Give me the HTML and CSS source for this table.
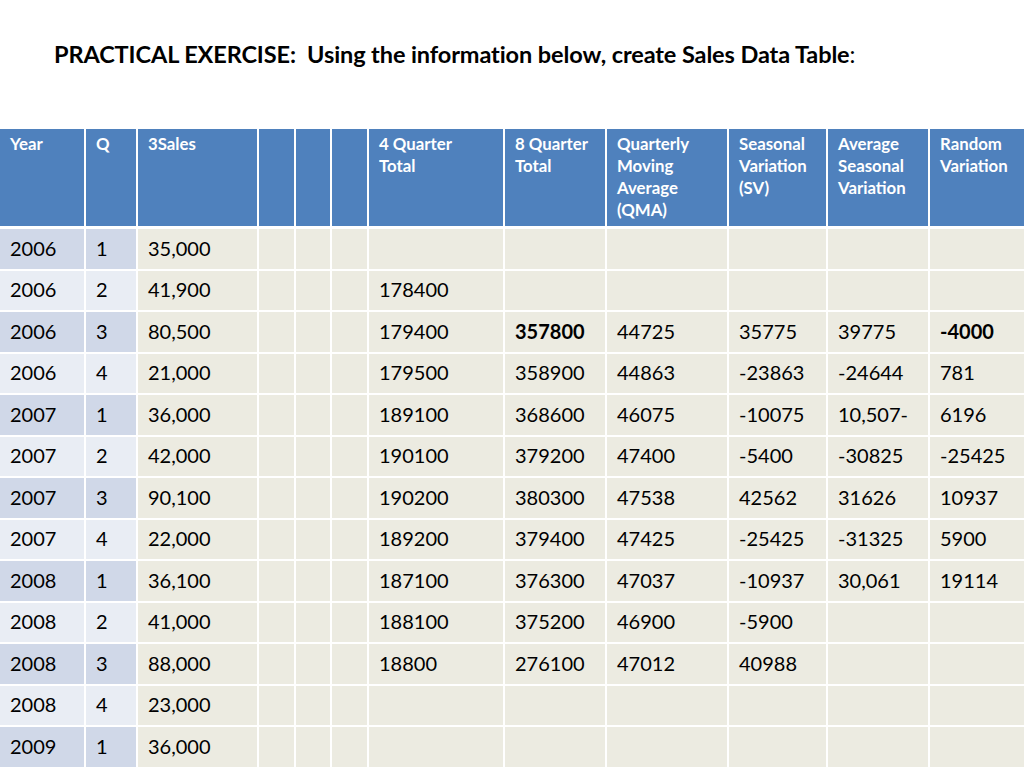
FILE: index.html
```html
<!DOCTYPE html>
<html>
<head>
<meta charset="utf-8">
<link rel="stylesheet" href="styles.css">
</head>
<body>
<h1 class="title"><b>PRACTICAL EXERCISE:&nbsp; Using the information below, create Sales Data Table</b>:</h1>
<table class="sales">
<colgroup>
<col style="width:86px"><col style="width:52px"><col style="width:121px"><col style="width:37px"><col style="width:36px"><col style="width:37px"><col style="width:136px"><col style="width:102px"><col style="width:122px"><col style="width:99px"><col style="width:102px"><col style="width:94px">
</colgroup>
<thead>
<tr>
<th>Year</th><th>Q</th><th>3Sales</th><th></th><th></th><th></th><th>4 Quarter<br>Total</th><th>8 Quarter Total</th><th>Quarterly Moving Average (QMA)</th><th>Seasonal Variation (SV)</th><th>Average Seasonal Variation</th><th>Random Variation</th>
</tr>
</thead>
<tbody>
<tr class="odd"><td class="k">2006</td><td class="k">1</td><td>35,000</td><td></td><td></td><td></td><td></td><td></td><td></td><td></td><td></td><td></td></tr>
<tr class="even"><td class="k">2006</td><td class="k">2</td><td>41,900</td><td></td><td></td><td></td><td>178400</td><td></td><td></td><td></td><td></td><td></td></tr>
<tr class="odd"><td class="k">2006</td><td class="k">3</td><td>80,500</td><td></td><td></td><td></td><td>179400</td><td class="b">357800</td><td>44725</td><td>35775</td><td>39775</td><td class="b">-4000</td></tr>
<tr class="even"><td class="k">2006</td><td class="k">4</td><td>21,000</td><td></td><td></td><td></td><td>179500</td><td>358900</td><td>44863</td><td>-23863</td><td>-24644</td><td>781</td></tr>
<tr class="odd"><td class="k">2007</td><td class="k">1</td><td>36,000</td><td></td><td></td><td></td><td>189100</td><td>368600</td><td>46075</td><td>-10075</td><td>10,507-</td><td>6196</td></tr>
<tr class="even"><td class="k">2007</td><td class="k">2</td><td>42,000</td><td></td><td></td><td></td><td>190100</td><td>379200</td><td>47400</td><td>-5400</td><td>-30825</td><td>-25425</td></tr>
<tr class="odd"><td class="k">2007</td><td class="k">3</td><td>90,100</td><td></td><td></td><td></td><td>190200</td><td>380300</td><td>47538</td><td>42562</td><td>31626</td><td>10937</td></tr>
<tr class="even"><td class="k">2007</td><td class="k">4</td><td>22,000</td><td></td><td></td><td></td><td>189200</td><td>379400</td><td>47425</td><td>-25425</td><td>-31325</td><td>5900</td></tr>
<tr class="odd"><td class="k">2008</td><td class="k">1</td><td>36,100</td><td></td><td></td><td></td><td>187100</td><td>376300</td><td>47037</td><td>-10937</td><td>30,061</td><td>19114</td></tr>
<tr class="even"><td class="k">2008</td><td class="k">2</td><td>41,000</td><td></td><td></td><td></td><td>188100</td><td>375200</td><td>46900</td><td>-5900</td><td></td><td></td></tr>
<tr class="odd"><td class="k">2008</td><td class="k">3</td><td>88,000</td><td></td><td></td><td></td><td>18800</td><td>276100</td><td>47012</td><td>40988</td><td></td><td></td></tr>
<tr class="even"><td class="k">2008</td><td class="k">4</td><td>23,000</td><td></td><td></td><td></td><td></td><td></td><td></td><td></td><td></td><td></td></tr>
<tr class="odd"><td class="k">2009</td><td class="k">1</td><td>36,000</td><td></td><td></td><td></td><td></td><td></td><td></td><td></td><td></td><td></td></tr>
</tbody>
</table>
</body>
</html>
```

FILE: styles.css
```css
html, body {
  margin: 0;
  padding: 0;
  background: #ffffff;
  font-family: "Lato", "Open Sans", sans-serif;
  color: #000;
}
body {
  width: 1024px;
  height: 768px;
  overflow: hidden;
}
.title {
  margin: 0;
  padding: 40px 0 0 54px;
  height: 129px;
  box-sizing: border-box;
  font-size: 23.5px;
  font-weight: normal;
  line-height: 28px;
  letter-spacing: -0.1px;
}
.title b {
  font-weight: 700;
}
.sales {
  width: 1024px;
  table-layout: fixed;
  border-collapse: separate;
  border-spacing: 0;
}
.sales th, .sales td {
  border-right: 2px solid #ffffff;
  border-bottom: 2px solid #ffffff;
  padding: 0 7px 0 10px;
  text-align: left;
  overflow: hidden;
  white-space: nowrap;
}
.sales th:last-child, .sales td:last-child {
  border-right: none;
}
.sales th {
  background: #4f81bd;
  color: #ffffff;
  font-weight: 700;
  font-size: 16.8px;
  line-height: 22px;
  height: 100px;
  vertical-align: top;
  padding-top: 4px;
  white-space: normal;
  box-sizing: border-box;
  border-bottom: 3px solid #ffffff;
}
.sales td {
  background: #ecebe1;
  font-size: 20px;
  height: 41.5px;
  box-sizing: border-box;
  vertical-align: middle;
  padding-bottom: 2px;
}
.sales tr.odd td.k {
  background: #d0d8e8;
}
.sales tr.even td.k {
  background: #e9edf4;
}
.sales td.b {
  font-weight: 700;
}
```
